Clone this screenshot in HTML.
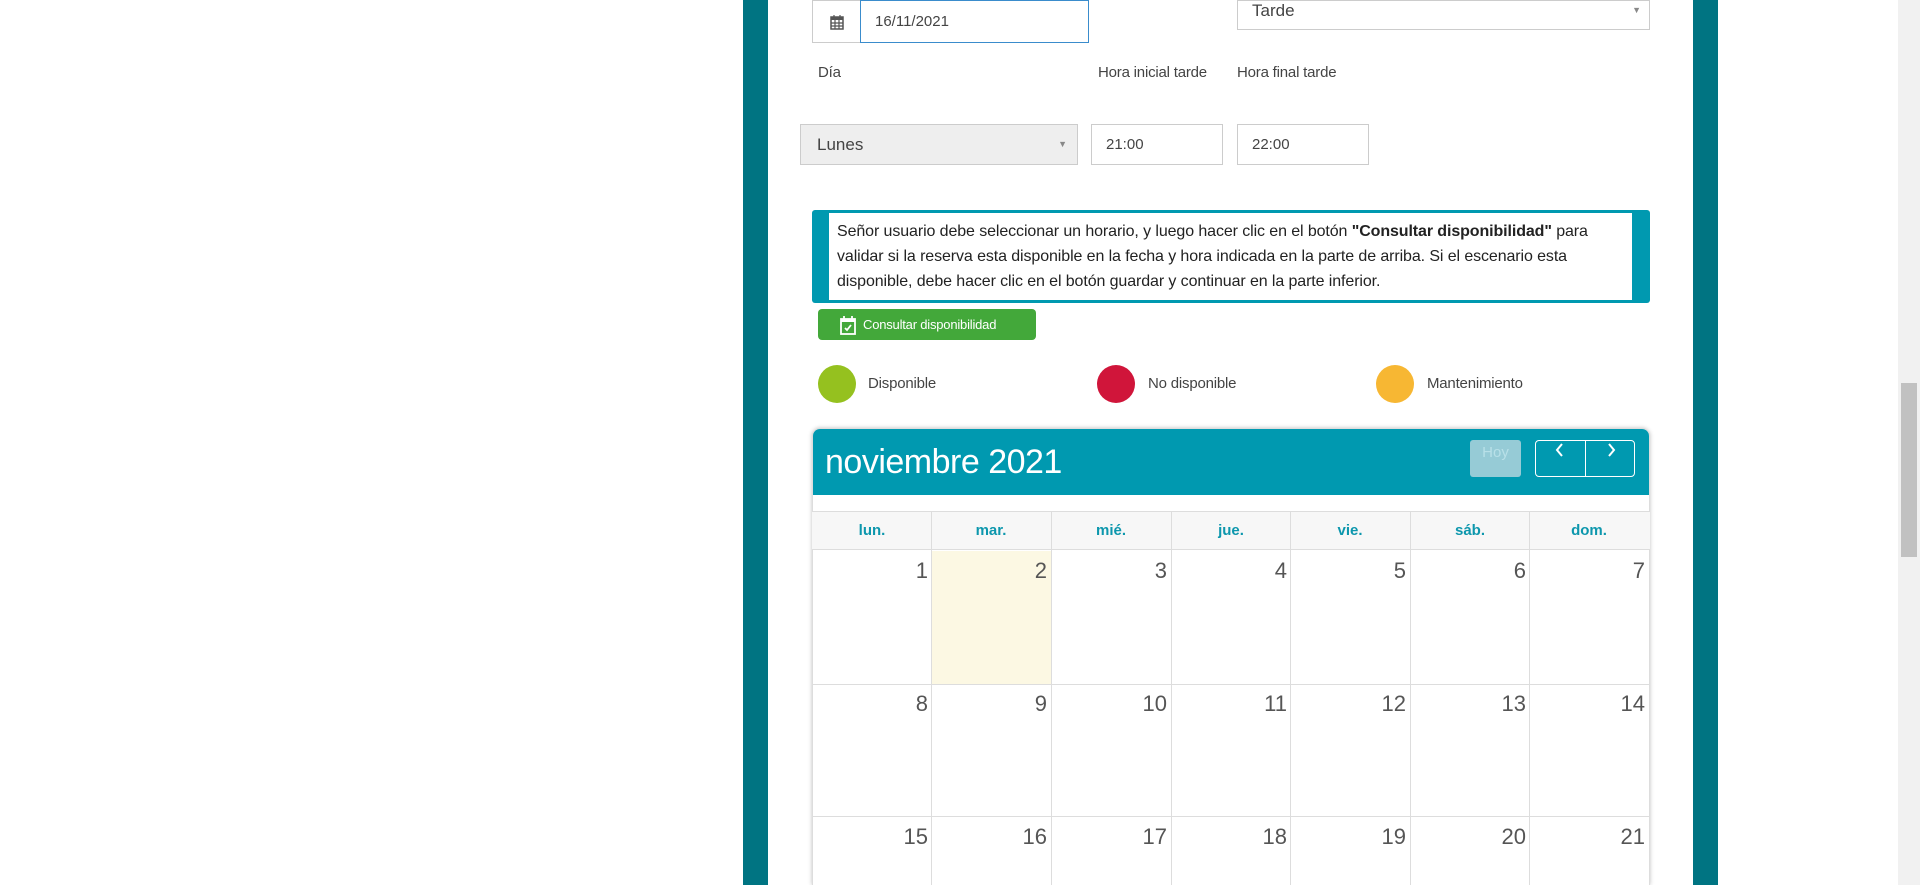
<!DOCTYPE html>
<html><head><meta charset="utf-8"><style>
*{box-sizing:border-box;margin:0;padding:0}
html{overflow:hidden;height:885px}
body{width:1920px;height:885px;overflow:hidden;background:#fff;font-family:"Liberation Sans",sans-serif;color:#333;position:relative}
.a{position:absolute}
.bar{background:#007482;top:0;height:885px}
.inp{border:1px solid #ccc;background:#fff;font-size:15px;color:#444;display:flex;align-items:center;padding-left:14px}
.lbl{font-size:15px;color:#444;letter-spacing:-0.2px}
.col{position:absolute;top:0;bottom:0;width:1px;background:#ddd}
.num{position:absolute;font-size:22px;color:#555;text-align:right;width:110px}
.dh{position:absolute;top:522px;font-size:15px;font-weight:bold;color:#0d97ad;text-align:center;width:120px}
</style></head><body>
<div class="a bar" style="left:743px;width:25px"></div>
<div class="a bar" style="left:1693px;width:25px"></div>
<div class="a" style="left:1898px;top:0;width:22px;height:885px;background:#f1f1f1"></div>
<div class="a" style="left:1901px;top:383px;width:16px;height:174px;background:#c1c1c1"></div>

<div class="a inp" style="left:812px;top:0;width:49px;height:43px;background:#fff;justify-content:center;padding:0">
<svg width="14" height="16" viewBox="0 0 14 16"><rect x="1" y="3" width="12" height="12" fill="none" stroke="#555" stroke-width="1.5"/><rect x="1" y="3" width="12" height="3" fill="#555"/><path d="M4 1v4M10 1v4M1 9h12M1 12h12M5 6v9M9 6v9" stroke="#555" stroke-width="1.2"/></svg></div>
<div class="a inp" style="left:860px;top:0;width:229px;height:43px;border-color:#3a8ccc">16/11/2021</div>
<div class="a inp" style="left:1237px;top:0;width:413px;height:30px;font-size:17px;align-items:flex-start;padding-top:0">Tarde<span style="position:absolute;right:8px;top:4px;font-size:9px;color:#888">▼</span></div>

<div class="a lbl" style="left:818px;top:64px">Día</div>
<div class="a lbl" style="left:1098px;top:64px">Hora inicial tarde</div>
<div class="a lbl" style="left:1237px;top:64px">Hora final tarde</div>

<div class="a inp" style="left:800px;top:124px;width:278px;height:41px;background:#eee;font-size:17px;padding-left:16px">Lunes<span style="position:absolute;right:10px;top:14px;font-size:9px;color:#888">▼</span></div>
<div class="a inp" style="left:1091px;top:124px;width:132px;height:41px">21:00</div>
<div class="a inp" style="left:1237px;top:124px;width:132px;height:41px">22:00</div>

<div class="a" style="left:812px;top:210px;width:838px;height:93px;background:#0099b0;border-radius:3px"></div>
<div class="a" style="left:829px;top:213px;width:803px;height:87px;background:#fff;padding:6px 8px;font-size:16px;line-height:25px;color:#222;letter-spacing:-0.1px;white-space:nowrap">Señor usuario debe seleccionar un horario, y luego hacer clic en el botón <b>"Consultar disponibilidad"</b> para<br>validar si la reserva esta disponible en la fecha y hora indicada en la parte de arriba. Si el escenario esta<br>disponible, debe hacer clic en el botón guardar y continuar en la parte inferior.</div>

<div class="a" style="left:818px;top:309px;width:218px;height:31px;background:#43a83a;border-radius:4px;color:#fff;font-size:13px;display:flex;align-items:center;padding-left:21px;letter-spacing:-0.2px">
<svg width="18" height="20" viewBox="0 0 18 20" style="margin-right:6px"><rect x="2" y="4" width="14" height="15" fill="none" stroke="#fff" stroke-width="1.8"/><rect x="2" y="4" width="14" height="3" fill="#fff"/><path d="M5 1v5M13 1v5M6 13l2 2 4-5" stroke="#fff" stroke-width="1.8" fill="none"/></svg>Consultar disponibilidad</div>

<div class="a" style="left:818px;top:365px;width:38px;height:38px;border-radius:50%;background:#95c11f"></div>
<div class="a lbl" style="left:868px;top:375px">Disponible</div>
<div class="a" style="left:1097px;top:365px;width:38px;height:38px;border-radius:50%;background:#d0153a"></div>
<div class="a lbl" style="left:1148px;top:375px">No disponible</div>
<div class="a" style="left:1376px;top:365px;width:38px;height:38px;border-radius:50%;background:#f7b733"></div>
<div class="a lbl" style="left:1427px;top:375px">Mantenimiento</div>

<div class="a" style="left:812px;top:428px;width:838px;height:457px;border:1px solid #ddd;border-bottom:none;border-radius:8px 8px 0 0;box-shadow:0 0 4px rgba(0,0,0,.25);overflow:hidden;background:#fff">
 <div class="a" style="left:0;top:0;width:838px;height:66px;background:#0099b0"></div>
</div>
<div class="a" style="left:825px;top:443px;font-size:34px;color:#fff;letter-spacing:-0.5px">noviembre 2021</div>
<div class="a" style="left:1470px;top:440px;width:51px;height:37px;background:#96cbd6;border-radius:3px;color:#b8e0e8;font-size:15px;text-align:center;padding-top:4px">Hoy</div>
<div class="a" style="left:1535px;top:440px;width:100px;height:37px;border:1px solid #fff;border-radius:4px"></div>
<div class="a" style="left:1585px;top:440px;width:1px;height:37px;background:#fff"></div>
<svg class="a" style="left:1553px;top:442px" width="14" height="16" viewBox="0 0 14 16"><path d="M9 2L4 8l5 6" stroke="#fff" stroke-width="2" fill="none"/></svg>
<svg class="a" style="left:1604px;top:442px" width="14" height="16" viewBox="0 0 14 16"><path d="M5 2l5 6-5 6" stroke="#fff" stroke-width="2" fill="none"/></svg>

<div class="a" style="left:812px;top:511px;width:838px;height:39px;background:#f7f7f7;border-top:1px solid #ddd;border-bottom:1px solid #ddd"></div>
<div class="a" style="left:812px;top:511px;width:838px;height:374px">
<div class="col" style="left:119px"></div><div class="col" style="left:239px"></div><div class="col" style="left:359px"></div><div class="col" style="left:478px"></div><div class="col" style="left:598px"></div><div class="col" style="left:717px"></div>
</div>
<div class="a" style="left:932px;top:551px;width:119px;height:133px;background:#fcf8e3"></div>
<div class="a" style="left:812px;top:684px;width:838px;height:1px;background:#ddd"></div>
<div class="a" style="left:812px;top:816px;width:838px;height:1px;background:#ddd"></div>

<div class="dh" style="left:812px">lun.</div><div class="dh" style="left:931px">mar.</div><div class="dh" style="left:1051px">mié.</div><div class="dh" style="left:1171px">jue.</div><div class="dh" style="left:1290px">vie.</div><div class="dh" style="left:1410px">sáb.</div><div class="dh" style="left:1529px">dom.</div>

<div class="num" style="left:818px;top:558px">1</div><div class="num" style="left:937px;top:558px">2</div><div class="num" style="left:1057px;top:558px">3</div><div class="num" style="left:1177px;top:558px">4</div><div class="num" style="left:1296px;top:558px">5</div><div class="num" style="left:1416px;top:558px">6</div><div class="num" style="left:1535px;top:558px">7</div>
<div class="num" style="left:818px;top:691px">8</div><div class="num" style="left:937px;top:691px">9</div><div class="num" style="left:1057px;top:691px">10</div><div class="num" style="left:1177px;top:691px">11</div><div class="num" style="left:1296px;top:691px">12</div><div class="num" style="left:1416px;top:691px">13</div><div class="num" style="left:1535px;top:691px">14</div>
<div class="num" style="left:818px;top:824px">15</div><div class="num" style="left:937px;top:824px">16</div><div class="num" style="left:1057px;top:824px">17</div><div class="num" style="left:1177px;top:824px">18</div><div class="num" style="left:1296px;top:824px">19</div><div class="num" style="left:1416px;top:824px">20</div><div class="num" style="left:1535px;top:824px">21</div>
</body></html>
